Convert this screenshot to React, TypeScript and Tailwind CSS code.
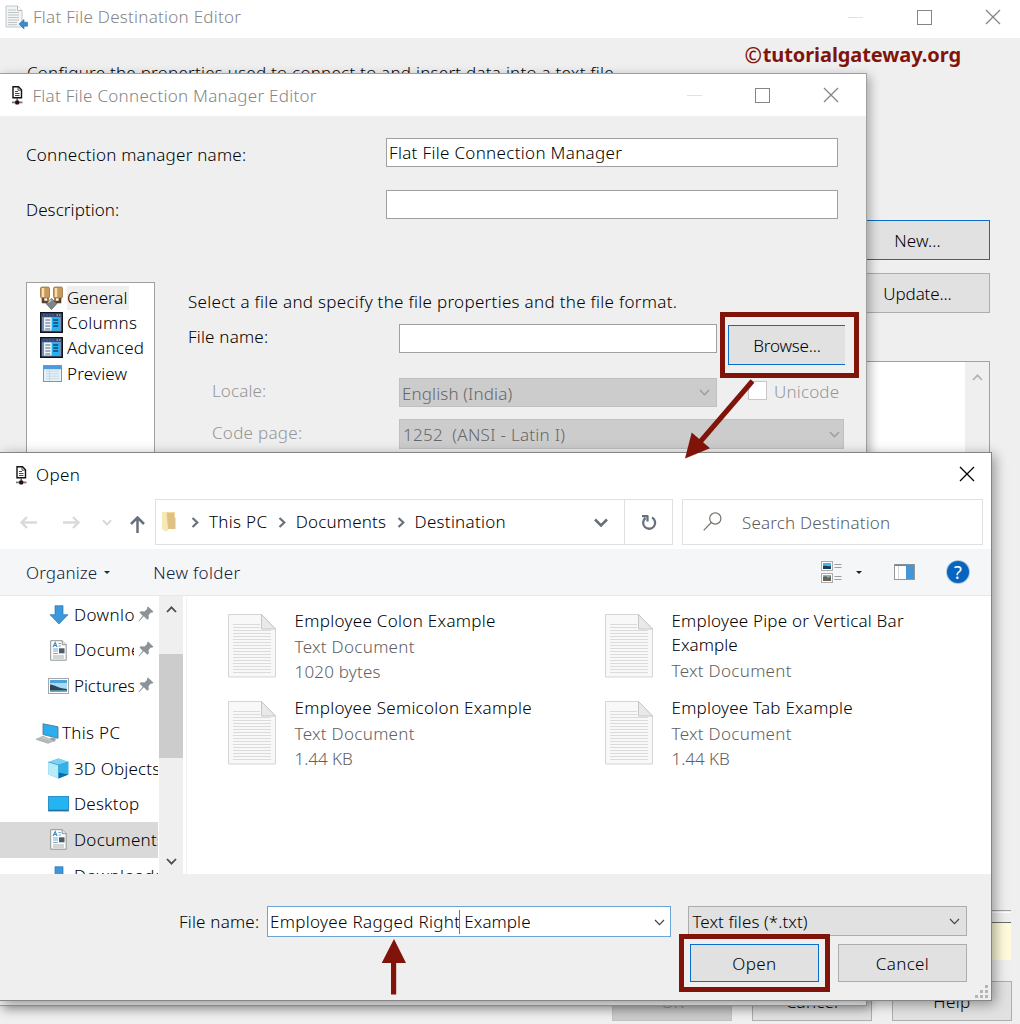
import { useLayoutEffect, useRef, useState } from "react";
import type { ReactNode } from "react";

/* Single line label whose tracking is computed so that it fills `w` pixels. */
function T({ w, children, className = "" }: { w: number; children: string; className?: string }) {
  const ref = useRef<HTMLSpanElement>(null);
  const [spacing, setSpacing] = useState(0);
  useLayoutEffect(() => {
    const el = ref.current;
    if (!el) return;
    el.style.letterSpacing = "0px";
    const natural = el.getBoundingClientRect().width;
    const value = (w + 0.3 - natural) / children.length;
    el.style.letterSpacing = `${value}px`;
    setSpacing(value);
  }, [w, children]);
  return (
    <span ref={ref} className={`inline-block shrink-0 self-start whitespace-pre leading-6 [font-variant-ligatures:none] ${className}`} style={{ letterSpacing: spacing }}>
      {children}
    </span>
  );
}

function CloseIcon() {
  return (
    <svg className="size-4" viewBox="0 0 16 16" fill="none" stroke="currentColor" strokeWidth="1.3">
      <path d="M1 1 15 15M15 1 1 15" />
    </svg>
  );
}

function WindowControls({ gapClass }: { gapClass: string }) {
  return (
    <div className={`flex items-center text-[#858585] ${gapClass}`}>
      <div className="h-px w-[15px] bg-[#e2e2e2]" />
      <div className="size-[15px] border border-current" />
      <CloseIcon />
    </div>
  );
}

function Chevron({ up = false, className = "", stroke = 1.4 }: { up?: boolean; className?: string; stroke?: number }) {
  return (
    <svg className={`h-[7px] w-[11px] shrink-0 ${className}`} viewBox="0 0 11 7" fill="none" stroke="currentColor" strokeWidth={stroke}>
      <path d={up ? "M1 6 5.5 1.3 10 6" : "M1 1 5.5 5.7 10 1"} />
    </svg>
  );
}

function ConnectionIcon() {
  return (
    <svg className="h-[19px] w-[12px] shrink-0" viewBox="0 0 12 19" fill="none">
      <path d="M2 .8h5.500l3 3v8H2z" fill="#fff" stroke="#111" strokeWidth="1.4" />
      <path d="M7 1v3.200h3.500M4 5.500h3M4 7.500h4.500M4 9.500h4.500" stroke="#333" strokeWidth=".9" />
      <path d="M6.200 12v3" stroke="#555" strokeWidth="1.400" />
      <path d="M1 16.400h10.500" stroke="#777" strokeWidth="1.800" />
      <rect x="4.200" y="14.500" width="4" height="4" rx="1" fill="#2b0d12" />
    </svg>
  );
}

function DestinationIcon() {
  return (
    <svg className="h-[25px] w-[23px] shrink-0" viewBox="0 0 23 25" fill="none">
      <path d="M1 1h11.5L17 5.5V22H1z" fill="#f3f4f4" stroke="#c4c7c8" />
      <path d="M12.5 1v4.5H17" fill="#fff" stroke="#b5b8b9" />
      <path d="M3 5h8M3 7.5h11M3 10h11M3 12.5h11M3 15h11M3 17.5h9M3 19.7h9" stroke="#b9c0c3" strokeWidth=".9" />
      <path d="m14 19 5-4.5v2.7h3.500v4H19V24z" fill="#3a8bcd" stroke="#2b6ea8" strokeWidth=".6" />
    </svg>
  );
}

function PlugIcon() {
  return (
    <svg className="h-6 w-[23px] shrink-0" viewBox="0 0 23 24">
      <path d="M3 11v5h6M20 11v5h-6" fill="none" stroke="#5e4028" strokeWidth="2.6" />
      <path d="M8 11v4M15 11v4" fill="none" stroke="#a87a45" strokeWidth="2" />
      <rect x=".5" y="1" width="9" height="11" rx="1.5" fill="#c89a5c" stroke="#8a6130" strokeWidth=".7" />
      <rect x="13.5" y="1" width="9" height="11" rx="1.5" fill="#c89a5c" stroke="#8a6130" strokeWidth=".7" />
      <path d="M3 2v9M16 2v9" stroke="#f6deb0" strokeWidth="2.4" />
      <path d="m6 17.500 5.500-5 5.500 5-5.500 6z" fill="#80858a" stroke="#52575c" strokeWidth=".7" />
      <path d="m8.500 16.500 3-2.700" stroke="#c9cdd0" strokeWidth="1.3" />
    </svg>
  );
}

function ColumnsIcon() {
  return (
    <svg className="h-[21px] w-[23px] shrink-0" viewBox="0 0 23 21">
      <rect x=".8" y=".8" width="21.4" height="19.4" fill="#6f8fb8" stroke="#10131c" strokeWidth="1.6" />
      <path d="M1.500 1.500h20v3.300h-20z" fill="#33405e" />
      <path d="M3 3h11" stroke="#3f73d0" strokeDasharray="2 1" />
      <path d="M16.500 3h1.500M19 3h1.500" stroke="#d9e4f5" strokeWidth="1.200" />
      <path d="M4 5.500h7.800v13H4z" fill="#eef3f6" />
      <path d="M11.800 5.500h7.800v13h-7.800z" fill="#24b2f4" />
      <path d="M5.300 8h5M5.300 11h5M5.300 14h5M5.300 17h5" stroke="#4d6a86" strokeWidth="1.200" />
      <path d="M13.200 8h5M13.200 11h5M13.200 14h5" stroke="#15436e" strokeWidth="1.400" />
    </svg>
  );
}

function PreviewIcon() {
  return (
    <svg className="h-[17px] w-[19px] shrink-0" viewBox="0 0 19 17">
      <rect x=".5" y=".5" width="18" height="16" fill="#e8f1f7" stroke="#7d97ac" />
      <path d="M1 1h17v3.2H1z" fill="#4d9bdc" />
      <path d="M3 6.2h13M3 8.7h13M3 11.2h13M3 13.7h13M6.5 5v11" stroke="#b9d3e4" strokeWidth=".8" />
    </svg>
  );
}

function PageIcon() {
  return (
    <svg className="h-[21px] w-[17px] shrink-0" viewBox="0 0 17 21" fill="none">
      <path d="M.7.7h11.5l4 4v15.5H.7z" fill="#fdfdfd" stroke="#8f9495" />
      <path d="M12.2.7v4h4" fill="#e6e6e6" stroke="#8f9495" />
      <path d="m3 7 2.200-4.400L7 7M4 5.500h2.500" stroke="#3b8ac4" strokeWidth="1.100" />
      <path d="M8.500 3.500h2.500M8.500 6h2.500M3 9h5M3 11h5M3 13.500h5" stroke="#7fa9c4" />
      <rect x="9" y="8.300" width="5.500" height="5" fill="#4a5d6b" />
      <path d="M3 16h11M3 18h11" stroke="#a8adb0" />
    </svg>
  );
}

function DownIcon() {
  return (
    <svg className="h-[20px] w-[20px] shrink-0" viewBox="0 0 20 20">
      <path d="M6 .7h8v9h5L10 19 1 9.700h5z" fill="#3d97dc" stroke="#2a75b6" strokeWidth=".7" />
    </svg>
  );
}

function PictureIcon() {
  return (
    <svg className="h-[16px] w-[21px] shrink-0" viewBox="0 0 21 16">
      <rect x=".5" y=".5" width="20" height="15" fill="#fff" stroke="#a3a7a9" />
      <path d="M2 2h17v12H2z" fill="#a9dbf2" />
      <path d="M2 2h17v3H2z" fill="#4ba5dc" />
      <path d="M2 6.500c5 .3 7 3.500 17 4.500v2H2z" fill="#2e4657" />
      <path d="M2 12.300h17V14H2z" fill="#6ca9c8" />
    </svg>
  );
}

function PcIcon() {
  return (
    <svg className="h-[21px] w-[23px] shrink-0" viewBox="0 0 23 21">
      <path d="m7 .8 15 3v11.500L7 11.500z" fill="#29aef0" stroke="#637684" strokeWidth=".9" />
      <path d="m15 14.500-2 2.500 6 1.500 1-3z" fill="#9aa3a8" />
      <path d="m0 16.300 7-3 11 4.500-6 2.500z" fill="#c9cdcf" stroke="#8d9396" strokeWidth=".6" />
      <path d="m2.500 16.300 10.500 3M4.500 15.300l10.500 3.200" stroke="#8d9396" strokeWidth=".5" />
    </svg>
  );
}

function CubeIcon() {
  return (
    <svg className="h-[21px] w-[21px] shrink-0" viewBox="0 0 21 21">
      <path d="m.5 4 10-3.500 10 3.500v12.500l-10 4-10-4z" fill="#34b2e8" />
      <path d="m.5 4 10 3v13.500l-10-4z" fill="#b8ecf8" />
      <path d="m.5 4 10-3.500 10 3.500-10 3z" fill="#7bd3f1" />
      <path d="m10.500 14.500 10 2-10 4z" fill="#0f6dad" />
      <path d="M10.500 7v13M.5 4l10 3 10-3" fill="none" stroke="#2a9fd2" strokeWidth=".7" />
    </svg>
  );
}

function DesktopIcon() {
  return (
    <svg className="h-[16px] w-[21px] shrink-0" viewBox="0 0 21 16">
      <rect x=".5" y=".5" width="20" height="14.500" fill="#22b4f3" stroke="#318fc7" />
      <path d="M1 13.700h19v1.300H1z" fill="#2c6e9b" />
    </svg>
  );
}

function PinIcon() {
  return (
    <svg className="h-[16px] w-[16px] shrink-0" viewBox="0 0 16 16" fill="#8c9297">
      <path d="m10 .5 5.500 5.300-1.600.9-1-.2-2.300 2.600.2 3.400-1.500 1.300-3.500-3.500L1 15.500l-.5-.4 4.200-5.400L1.500 6.500l1.400-1.300 3.500.3 2.700-2.500-.1-1.300z" />
    </svg>
  );
}

function TextFileIcon() {
  return (
    <svg className="h-[64px] w-[48px] shrink-0" viewBox="0 0 48 64" fill="none">
      <path d="M.5.5h33L47.500 15v48H.5z" fill="#f8f8f8" stroke="#d5d5d5" />
      <path
        d="M5 10.500h27M5 13.500h27M5 16.500h38M5 19.500h38M5 22.500h38M5 25.500h38M5 28.500h38M5 31.500h38M5 34.500h38M5 37.500h38M5 40.500h38M5 43.500h38M5 46.500h38M5 49.500h38M5 52.500h38M5 55.500h38M5 58.500h38"
        stroke="#dadbdb"
      />
      <path d="M33.500.5V15h14z" fill="#e9e9e9" stroke="#c6c6c6" />
    </svg>
  );
}

function NavRow({ icon, label, w, pinned = false, selected = false, root = false }: {
  icon: ReactNode; label: string; w: number; pinned?: boolean; selected?: boolean; root?: boolean;
}) {
  return (
    <div className={`flex h-[35.6px] w-[158px] shrink-0 items-center overflow-hidden ${root ? "pl-9" : "pl-12"} ${selected ? "bg-[#d9d9d9]" : ""}`}>
      <div className="flex w-[26px] shrink-0"><div className={root ? "" : "flex w-[21px] justify-center"}>{icon}</div></div>
      <div className={`flex overflow-hidden ${pinned ? "w-[60px]" : ""}`}><T w={w}>{label}</T></div>
      {pinned && <div className="-mt-0.5 ml-1"><PinIcon /></div>}
    </div>
  );
}

function FileItem({ name, w, second, secondW, size, sizeW }: {
  name: string; w: number; second?: string; secondW?: number; size?: string; sizeW?: number;
}) {
  return (
    <div className="flex h-[87px] gap-[18.500px]">
      <div className="mt-[5px]"><TextFileIcon /></div>
      <div className="flex flex-col">
        <T w={w}>{name}</T>
        {second && <T w={secondW ?? 0}>{second}</T>}
        <div className="flex flex-col gap-px pt-[2px] text-[#606060]">
          <T w={120}>Text Document</T>
          {size && <T w={sizeW ?? 0}>{size}</T>}
        </div>
      </div>
    </div>
  );
}

function ButtonFace({ className, children, w }: { className: string; children: string; w: number }) {
  return (
    <div className={`flex items-center justify-center border pt-[2px] ${className}`}>
      <T w={w} className="!self-center">{children}</T>
    </div>
  );
}

function DestinationEditor() {
  return (
    <section className="flex h-[1024px] w-[1020px] flex-col bg-[#efefef]">
      <header className="flex h-[38px] shrink-0 items-center bg-white pl-[5px] pr-[19px] pb-1 text-[#858585]">
        <DestinationIcon />
        <T w={208} className="ml-[5px] mt-[5px]">Flat File Destination Editor</T>
        <div className="ml-auto"><WindowControls gapClass="gap-[53.500px]" /></div>
      </header>
      <div className="flex h-[182px] shrink-0 justify-between pl-[27px] pr-[59px]">
        <T w={591} className="mt-[23px]">Configure the properties used to connect to and insert data into a text file.</T>
        <div className="mt-[5px] flex text-[20px] text-[#80140a]">
          <T w={18} className="text-[21px] font-semibold">©</T>
          <T w={198} className="font-bold">tutorialgateway.org</T>
        </div>
      </div>
      <div className="flex flex-col items-end pr-[30px]">
        <ButtonFace className="h-10 w-[145px] border-[#0b6ccb] bg-[#e1e1e1]" w={46}>New...</ButtonFace>
        <ButtonFace className="mt-[13px] h-10 w-[145px] border-[#adadad] bg-[#e1e1e1]" w={68}>Update...</ButtonFace>
        <div className="mt-12 flex h-[500px] w-[600px] justify-end border border-[#a0a0a0] bg-white">
          <div className="flex w-6 justify-center bg-[#efefef] pt-3 text-[#b4b4b4]"><Chevron up stroke={1.8} /></div>
        </div>
      </div>
      <div className="mr-[9px] mt-[49px] h-[3px] shrink-0 border-y border-b-white border-t-[#a0a0a0]" />
      <div className="mr-[9px] mt-[9px] h-[38px] shrink-0 border-t border-[#6c6c6c] bg-[#fffbdc]" />
      <div className="mt-[21px] flex justify-end gap-5 pr-2">
        <ButtonFace className="h-10 w-[120px] border-[#c2c2c2] bg-[#cccccc] text-[#8d8d8d]" w={22}>OK</ButtonFace>
        <ButtonFace className="h-10 w-[120px] border-[#adadad] bg-[#e1e1e1]" w={52}>Cancel</ButtonFace>
        <ButtonFace className="h-10 w-[120px] border-[#adadad] bg-[#e1e1e1]" w={37}>Help</ButtonFace>
      </div>
    </section>
  );
}

function ConnectionManagerEditor() {
  return (
    <section className="absolute left-0 top-[73px] flex h-[933px] w-[867px] flex-col border-r border-t border-b border-[#9f9f9f] bg-[#efefef] shadow-[3px_3px_10px_rgba(0,0,0,0.3)]">
      <header className="flex h-[42px] shrink-0 items-center bg-white pl-[11px] pr-[27px] text-[#858585]">
        <ConnectionIcon />
        <T w={284} className="ml-[9.500px] mt-[10px]">Flat File Connection Manager Editor</T>
        <div className="ml-auto"><WindowControls gapClass="gap-[53px]" /></div>
      </header>
      <div className="mt-[22px] flex h-[29px] shrink-0 pl-[26px]">
        <T w={220} className="mr-[139.700px] mt-[5px]">Connection manager name:</T>
        <div className="flex h-[29px] w-[452px] border border-[#a0a0a0] bg-white pl-0.5 pt-0.5"><T w={233}>Flat File Connection Manager</T></div>
      </div>
      <div className="mt-[23px] flex h-[29px] shrink-0 pl-[26px]">
        <T w={93} className="mr-[266.700px] mt-2">Description:</T>
        <div className="h-[29px] w-[452px] border border-[#a0a0a0] bg-white" />
      </div>
      <div className="mt-[63px] flex">
        <nav className="ml-[26px] flex h-[600px] w-[129px] flex-col border border-[#a0a0a0] bg-white pl-[13px] pt-[2px]">
          <div className="flex h-[25px] items-center gap-1"><PlugIcon /><div className="flex h-6 bg-[#efefef] pr-0.5"><T w={60}>General</T></div></div>
          <div className="flex h-[25.300px] items-center gap-1"><ColumnsIcon /><T w={70} className="mt-px">Columns</T></div>
          <div className="flex h-[25.300px] items-center gap-1"><ColumnsIcon /><T w={77} className="mt-px">Advanced</T></div>
          <div className="flex h-[25.300px] items-center gap-[5px] pl-[3px]"><PreviewIcon /><T w={60} className="mt-px">Preview</T></div>
        </nav>
        <div className="ml-[33px] flex flex-col">
          <T w={489} className="mt-2">Select a file and specify the file properties and the file format.</T>
          <div className="mt-[10px] flex h-[54px]">
            <T w={80} className="mr-[130.700px] mt-px">File name:</T>
            <div className="h-[29px] w-[318px] border border-[#a0a0a0] bg-white" />
            <ButtonFace className="ml-[11px] mt-px h-10 w-[117px] border-r-0 border-[#0b6ccb] bg-[#e1e1e1]" w={67}>Browse...</ButtonFace>
          </div>
          <div className="flex h-[41px] pl-6 text-[#969696]">
            <T w={54} className="mr-[132.700px] mt-px">Locale:</T>
            <div className="flex h-[29px] w-[318px] items-center justify-between border border-[#c0c0c0] bg-[#cccccc] pl-0.5 pr-[6px] text-[#666]">
              <T w={110} className="mt-[2.500px]">English (India)</T><Chevron className="text-[#9c9c9c]" />
            </div>
            <div className="ml-[31px] mt-[3px] size-[19px] border border-[#c8c8c8] bg-white" />
            <T w={65} className="ml-[7px] mt-0.5">Unicode</T>
          </div>
          <div className="flex h-[29px] pl-6 text-[#969696]">
            <T w={90} className="mr-[96.700px] mt-0.5">Code page:</T>
            <div className="flex h-[30px] w-[445px] items-center justify-between border border-[#c0c0c0] bg-[#cccccc] pl-[3px] pr-[3px] text-[#666]">
              <T w={162} className="mt-[3px]">1252  (ANSI - Latin I)</T><Chevron className="text-[#9c9c9c]" />
            </div>
          </div>
        </div>
      </div>
    </section>
  );
}

function Crumb({ children, w }: { children: string; w: number }) {
  return (
    <div className="flex items-center">
      <svg className="mr-[10px] h-[11px] w-[8px]" viewBox="0 0 8 11" fill="none" stroke="#68717b" strokeWidth="2.200"><path d="m1.500 1 4.800 4.500-4.800 4.500" /></svg>
      <T w={w}>{children}</T>
    </div>
  );
}

function OpenDialog() {
  return (
    <section className="absolute left-0 top-[452px] flex h-[549px] w-[992px] flex-col border-b border-r border-t border-[#858585] bg-white shadow-[3px_3px_12px_rgba(0,0,0,0.38)]">
      <header className="flex h-[46px] shrink-0 items-center pl-[15px] pr-4">
        <div className="-mt-0.5"><ConnectionIcon /></div>
        <T w={44} className="ml-[9px] mt-[10px]">Open</T>
        <div className="-mt-1 ml-auto"><CloseIcon /></div>
      </header>
      <div className="flex h-[50px] shrink-0 items-start">
        <div className="flex h-[46px] w-[155px] items-center pl-5 text-[#dadada]">
          <svg className="h-[13px] w-[17px]" viewBox="0 0 17 13" fill="none" stroke="currentColor" strokeWidth="2.400"><path d="M17 6.500H2M7 1 1.500 6.500 7 12" /></svg>
          <svg className="ml-[26px] h-[13px] w-[17px]" viewBox="0 0 17 13" fill="none" stroke="currentColor" strokeWidth="2.400"><path d="M0 6.500h15M10 1l5.500 5.500L10 12" /></svg>
          <Chevron stroke={2.2} className="ml-[22px] !w-[10px]" />
          <svg className="ml-[18px] mt-1 h-[17px] w-[15px] text-[#68717b]" viewBox="0 0 15 17" fill="none" stroke="currentColor" strokeWidth="2.500"><path d="M7.500 17V2M1 8l6.500-6.500L14 8" /></svg>
        </div>
        <div className="flex h-[46px] w-[518px] items-center border border-[#e0e0e0] pl-[6px]">
          <svg className="mr-[15px] h-5 w-[14px]" viewBox="0 0 14 20"><path d="M0 0h13v16.500L3 17l1 2.500L0 17z" fill="#efd9a0" /><path d="M5 1h7v4l1.500 1v11H6z" fill="#dfc283" /><path d="M0 0h4l2 18.500-2 1L0 17z" fill="#f7e8b8" /></svg>
          <div className="flex gap-[10.500px]">
            <Crumb w={58}>This PC</Crumb>
            <Crumb w={90}>Documents</Crumb>
            <Crumb w={91}>Destination</Crumb>
          </div>
          <svg className="ml-auto h-[9px] w-[14px]" viewBox="0 0 14 9" fill="none" stroke="#68717b" strokeWidth="2.600"><path d="m1 1.500 6 6 6-6" /></svg>
          <div className="ml-4 flex h-full w-[48px] items-center justify-center border-l border-[#e0e0e0]">
            <svg className="h-[17px] w-[16px]" viewBox="0 0 16 17" fill="none" stroke="#68717b" strokeWidth="2.300"><path d="M11 3.500A6 6 0 1 1 4.500 4M1 2.200h6M6.500 1.500v6" /></svg>
          </div>
        </div>
        <div className="ml-[9px] flex h-[46px] w-[301px] items-center border border-[#e0e0e0] pl-5 text-[#5c5c5c]">
          <svg className="-mt-0.5 mr-5 h-[19px] w-[19px]" viewBox="0 0 19 19" fill="none" stroke="#77736c" strokeWidth="1.200"><circle cx="12.300" cy="6.500" r="5.600" /><path d="M8.300 10.500.7 18.300" /></svg>
          <T w={148} className="mt-[11px]">Search Destination</T>
        </div>
      </div>
      <div className="flex h-[47px] shrink-0 items-center border-b border-[#e7e8e8] bg-[#f5f6f7] pl-[26px] pr-[22px] text-[#14213c]">
        <T w={71} className="mt-3">Organize</T>
        <div className="ml-[7px] h-0 w-0 border-x-[3px] border-t-[3px] border-x-transparent border-t-[#1c2a45]" />
        <T w={87} className="ml-[43px] mt-3">New folder</T>
        <div className="ml-auto flex items-center">
          <svg className="h-[22px] w-[21px]" viewBox="0 0 21 22" fill="none">
            <rect x=".5" y=".5" width="11" height="9" fill="#fff" stroke="#a9adb0" /><path d="M2 2h8v6H2z" fill="#4eb4e8" /><path d="M2 5c3-1 5 1 8 0v3H2z" fill="#1c3c56" />
            <rect x=".5" y="12.500" width="11" height="9" fill="#fff" stroke="#a9adb0" /><path d="M2 14h8v6H2z" fill="#7fb5d8" /><path d="m2 16 3-1 2 2 3-2v5H2z" fill="#70624f" />
            <path d="M13.500 3.500h7M13.500 6.500h7M13.500 15.500h7M13.500 18.500h7" stroke="#9a9da0" />
          </svg>
          <div className="ml-[14px] h-0 w-0 border-x-[3px] border-t-[3px] border-x-transparent border-t-[#222]" />
          <svg className="ml-8 h-[16px] w-[21px]" viewBox="0 0 21 16"><rect x=".5" y=".5" width="20" height="15" fill="#fff" stroke="#93989c" /><path d="M12 1.500h8V15h-8z" fill="#4596d6" /><path d="M1 1.300h19" stroke="#73889a" strokeWidth="1.500" /><path d="M4.500 2v13" stroke="#d4d7d9" /></svg>
          <div className="ml-8 flex size-[22px] items-center justify-center rounded-full bg-[#0764be] text-[18px] font-normal leading-none text-white ring-1 ring-[#0764be]/30"><span className="-mt-px">?</span></div>
        </div>
      </div>
      <div className="flex h-[278px] shrink-0 overflow-hidden pt-px">
        <nav className="flex h-full w-[158px] flex-col overflow-hidden">
          <NavRow icon={<DownIcon />} label="Downloads" w={89} pinned />
          <NavRow icon={<PageIcon />} label="Documents" w={91} pinned />
          <NavRow icon={<PictureIcon />} label="Pictures" w={61} pinned />
          <div className="h-[11.600px] shrink-0" />
          <NavRow icon={<PcIcon />} label="This PC" w={58} root />
          <NavRow icon={<CubeIcon />} label="3D Objects" w={86} />
          <NavRow icon={<DesktopIcon />} label="Desktop" w={65} />
          <NavRow icon={<PageIcon />} label="Documents" w={91} selected />
          <NavRow icon={<DownIcon />} label="Downloads" w={89} />
        </nav>
        <div className="-mt-px ml-px flex w-6 flex-col items-center bg-[#efefef] text-[#4c4c4c]">
          <Chevron up stroke={1.800} className="mt-[10px]" />
          <div className="mt-[41px] h-[104px] w-6 bg-[#cccccc]" />
          <Chevron stroke={1.800} className="mb-[9px] mt-auto" />
        </div>
        <div className="ml-[3px] flex border-l border-[#f2f2f2] pl-[41px] pt-[12px]">
          <div className="w-[377px]">
            <FileItem name="Employee Colon Example" w={201} size="1020 bytes" sizeW={86} />
            <FileItem name="Employee Semicolon Example" w={237} size="1.44 KB" sizeW={58} />
          </div>
          <div>
            <FileItem name="Employee Pipe or Vertical Bar" w={232} second="Example" secondW={66} />
            <FileItem name="Employee Tab Example" w={181} size="1.44 KB" sizeW={58} />
          </div>
        </div>
      </div>
      <footer className="relative flex grow flex-col bg-[#efefef] pr-6">
        <div className="mt-8 flex h-[31px] items-start">
          <T w={80} className="ml-[179px] mt-1">File name:</T>
          <div className="ml-[7.700px] flex h-[31px] w-[405px] items-center border border-[#6ba5d8] bg-white pl-0.5 pr-[5px] pt-px">
            <T w={190} className="!self-center">Employee Ragged Right</T>
            <div className="-ml-px h-6 w-px bg-[#777]" />
            <T w={66} className="ml-1 !self-center">Example</T>
            <Chevron className="ml-auto text-[#444]" stroke={1.200} />
          </div>
          <div className="ml-[17px] flex h-[30px] w-[279px] items-center justify-between border border-[#adadad] bg-[#e1e1e1] pl-[3px] pr-[6px]">
            <T w={115} className="mt-[3px]">Text files (*.txt)</T>
            <Chevron className="text-[#444]" stroke={1.200} />
          </div>
        </div>
        <div className="mt-[7px] flex justify-end gap-[19px]">
          <ButtonFace className="h-[38px] w-[129px] border-[#0b6ccb] bg-[#e1e1e1]" w={44}>Open</ButtonFace>
          <ButtonFace className="h-[38px] w-[129px] border-[#adadad] bg-[#e1e1e1]" w={53}>Cancel</ButtonFace>
        </div>
        <svg className="absolute bottom-0.5 right-0.5 h-[13px] w-[14px]" viewBox="0 0 14 13" fill="#b5b5b5"><path d="M10 0h3v3h-3zM5 5h3v3H5zM10 5h3v3h-3zM0 10h3v3H0zM5 10h3v3H5zM10 10h3v3h-3z" /></svg>
      </footer>
    </section>
  );
}

export default function App() {
  return (
    <main className="relative h-[1024px] w-[1020px] overflow-hidden font-['Noto_Sans','Open_Sans',sans-serif] text-[17px] font-[350] text-black">
      <DestinationEditor />
      <ConnectionManagerEditor />
      <OpenDialog />
      {/* Tutorial annotations: highlight frames and arrows */}
      <div className="absolute left-[720px] top-[312px] h-[66px] w-[139px] border-[5px] border-[#80140a]" />
      <div className="absolute left-[679px] top-[934px] h-[58px] w-[151px] border-[5px] border-[#80140a]" />
      <svg className="absolute left-[684px] top-[378px] h-[82px] w-[72px]" viewBox="0 0 72 82" fill="#80140a">
        <path d="m1 80.500 6.700-26L26 70.300z" />
        <path d="M68.500 3 16 64" stroke="#80140a" strokeWidth="5" />
      </svg>
      <svg className="absolute left-[381px] top-[939px] h-[56px] w-[26px]" viewBox="0 0 26 56" fill="#80140a">
        <path d="M13 0 25 24H15.200v31.500H10V24H.7z" />
      </svg>
    </main>
  );
}
